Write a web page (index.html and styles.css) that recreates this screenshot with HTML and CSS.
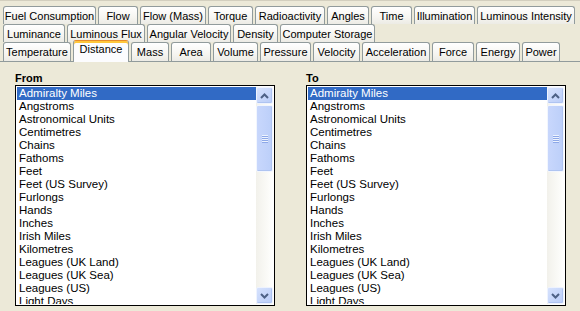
FILE: index.html
```html
<!DOCTYPE html>
<html lang="en">
<head>
    <meta charset="UTF-8">
    <meta name="viewport" content="width=device-width, initial-scale=1.0">
    <title>Unit Converter</title>
    <link rel="stylesheet" href="styles.css">
</head>
<body>

    <div class="converter">
        <div class="tabs">
            <div class="tab-row row-1">
                <div class="tab">Fuel Consumption</div>
                <div class="tab">Flow</div>
                <div class="tab">Flow (Mass)</div>
                <div class="tab">Torque</div>
                <div class="tab">Radioactivity</div>
                <div class="tab">Angles</div>
                <div class="tab">Time</div>
                <div class="tab">Illumination</div>
                <div class="tab">Luminous Intensity</div>
            </div>
            <div class="tab-row row-2">
                <div class="tab">Luminance</div>
                <div class="tab">Luminous Flux</div>
                <div class="tab">Angular Velocity</div>
                <div class="tab">Density</div>
                <div class="tab">Computer Storage</div>
            </div>
            <div class="tab-row row-3">
                <div class="tab">Temperature</div>
                <div class="tab active">Distance</div>
                <div class="tab">Mass</div>
                <div class="tab">Area</div>
                <div class="tab">Volume</div>
                <div class="tab">Pressure</div>
                <div class="tab">Velocity</div>
                <div class="tab">Acceleration</div>
                <div class="tab">Force</div>
                <div class="tab">Energy</div>
                <div class="tab">Power</div>
            </div>
        </div>

        <div class="panel">
            <div class="pane">
                <div class="pane-label">From</div>
                <div class="listbox">
                    <ul class="items">
                        <li class="selected">Admiralty Miles</li>
                        <li>Angstroms</li>
                        <li>Astronomical Units</li>
                        <li>Centimetres</li>
                        <li>Chains</li>
                        <li>Fathoms</li>
                        <li>Feet</li>
                        <li>Feet (US Survey)</li>
                        <li>Furlongs</li>
                        <li>Hands</li>
                        <li>Inches</li>
                        <li>Irish Miles</li>
                        <li>Kilometres</li>
                        <li>Leagues (UK Land)</li>
                        <li>Leagues (UK Sea)</li>
                        <li>Leagues (US)</li>
                        <li>Light Days</li>
                        <li>Light Years</li>
                    </ul>
                    <div class="scrollbar">
                        <div class="sb-btn"><svg width="9" height="6" viewBox="0 0 9 6"><polyline points="1,5 4.5,1.5 8,5"/></svg></div>
                        <div class="sb-track"><div class="sb-thumb"><span class="grip"></span></div></div>
                        <div class="sb-btn"><svg width="9" height="6" viewBox="0 0 9 6"><polyline points="1,1 4.5,4.5 8,1"/></svg></div>
                    </div>
                </div>
            </div>

            <div class="pane">
                <div class="pane-label">To</div>
                <div class="listbox">
                    <ul class="items">
                        <li class="selected">Admiralty Miles</li>
                        <li>Angstroms</li>
                        <li>Astronomical Units</li>
                        <li>Centimetres</li>
                        <li>Chains</li>
                        <li>Fathoms</li>
                        <li>Feet</li>
                        <li>Feet (US Survey)</li>
                        <li>Furlongs</li>
                        <li>Hands</li>
                        <li>Inches</li>
                        <li>Irish Miles</li>
                        <li>Kilometres</li>
                        <li>Leagues (UK Land)</li>
                        <li>Leagues (UK Sea)</li>
                        <li>Leagues (US)</li>
                        <li>Light Days</li>
                        <li>Light Years</li>
                    </ul>
                    <div class="scrollbar">
                        <div class="sb-btn"><svg width="9" height="6" viewBox="0 0 9 6"><polyline points="1,5 4.5,1.5 8,5"/></svg></div>
                        <div class="sb-track"><div class="sb-thumb"><span class="grip"></span></div></div>
                        <div class="sb-btn"><svg width="9" height="6" viewBox="0 0 9 6"><polyline points="1,1 4.5,4.5 8,1"/></svg></div>
                    </div>
                </div>
            </div>
        </div>
    </div>

</body>
</html>
```

FILE: styles.css
```css
body {
    margin: 0;
    background-color: #ECE9D8;
    font-family: "Liberation Sans", Arial, sans-serif;
    font-size: 11px;
    color: #000;
}

.converter {
    height: 311px;
    border-top: 1px solid #D3CFBF;
    box-sizing: border-box;
    overflow: hidden;
}

.tabs {
    padding: 5px 0 0 3px;
}

.tab-row {
    display: grid;
    column-gap: 2px;
    height: 18px;
}

.row-1 {
    grid-template-columns: 93px 40px 66px 45px 70px 42px 41px 61px 98px;
}

.row-2 {
    grid-template-columns: 62px 78px 84px 45px 95px;
}

.row-3 {
    grid-template-columns: 68px 56px 38px 40px 45px 51px 47px 68px 42px 44px 38px;
    height: 19px;
}

.tab {
    box-sizing: border-box;
    height: 100%;
    padding-top: 1px;
    border: 1px solid #919B9C;
    border-bottom: none;
    border-radius: 3px 3px 0 0;
    background: linear-gradient(#FFFFFF, #F6F5F1 60%, #ECEBE5);
    line-height: 16px;
    text-align: center;
    white-space: nowrap;
    overflow: hidden;
}

.tab.active {
    position: relative;
    z-index: 1;
    height: calc(100% + 3px);
    margin-top: -2px;
    padding-top: 0;
    border-top: 1px solid #E68B2C;
    box-shadow: inset 0 2px 0 #FFC73C;
    background: #FCFCFE;
    line-height: 17px;
}

.panel {
    display: flex;
    gap: 31px;
    padding: 10px 0 0 15px;
    border-top: 1px solid #919B9C;
}

.pane {
    width: 260px;
}

.pane-label {
    height: 13px;
    line-height: 13px;
    font-weight: bold;
}

.listbox {
    display: flex;
    height: 221px;
    box-sizing: border-box;
    padding: 1px;
    border: 1px solid #000;
    background-color: #fff;
}

.items {
    flex: 1;
    margin: 0;
    padding: 0;
    list-style: none;
    overflow: hidden;
}

.items li {
    height: 13px;
    line-height: 13px;
    padding-left: 2px;
    font-size: 11.5px;
    white-space: nowrap;
}

.items li.selected {
    background-color: #316AC5;
    color: #fff;
}

.scrollbar {
    display: flex;
    flex-direction: column;
    width: 17px;
    background: linear-gradient(90deg, #F2F1EB, #FBFBF8 70%, #FFFFFF);
}

.sb-btn {
    display: flex;
    align-items: center;
    justify-content: center;
    height: 17px;
    box-sizing: border-box;
    border: 1px solid #EEF3FE;
    border-radius: 2px;
    background: linear-gradient(135deg, #D6E2FD, #BACDF8);
    box-shadow: inset -1px -1px 0 #AFC4F1;
}

.sb-btn svg polyline {
    fill: none;
    stroke: #4D6185;
    stroke-width: 2;
}

.sb-track {
    flex: 1;
    padding-top: 1px;
}

.sb-thumb {
    display: flex;
    align-items: center;
    justify-content: center;
    height: 67px;
    box-sizing: border-box;
    border: 1px solid #F2F6FE;
    border-radius: 2px;
    background: linear-gradient(90deg, #C8D7FC, #BCCFF9);
    box-shadow: inset -1px -1px 0 #AFC4F1;
}

.grip {
    width: 6px;
    height: 8px;
    background: repeating-linear-gradient(#EEF4FE 0 1px, #8DA8E8 1px 2px);
}
```
